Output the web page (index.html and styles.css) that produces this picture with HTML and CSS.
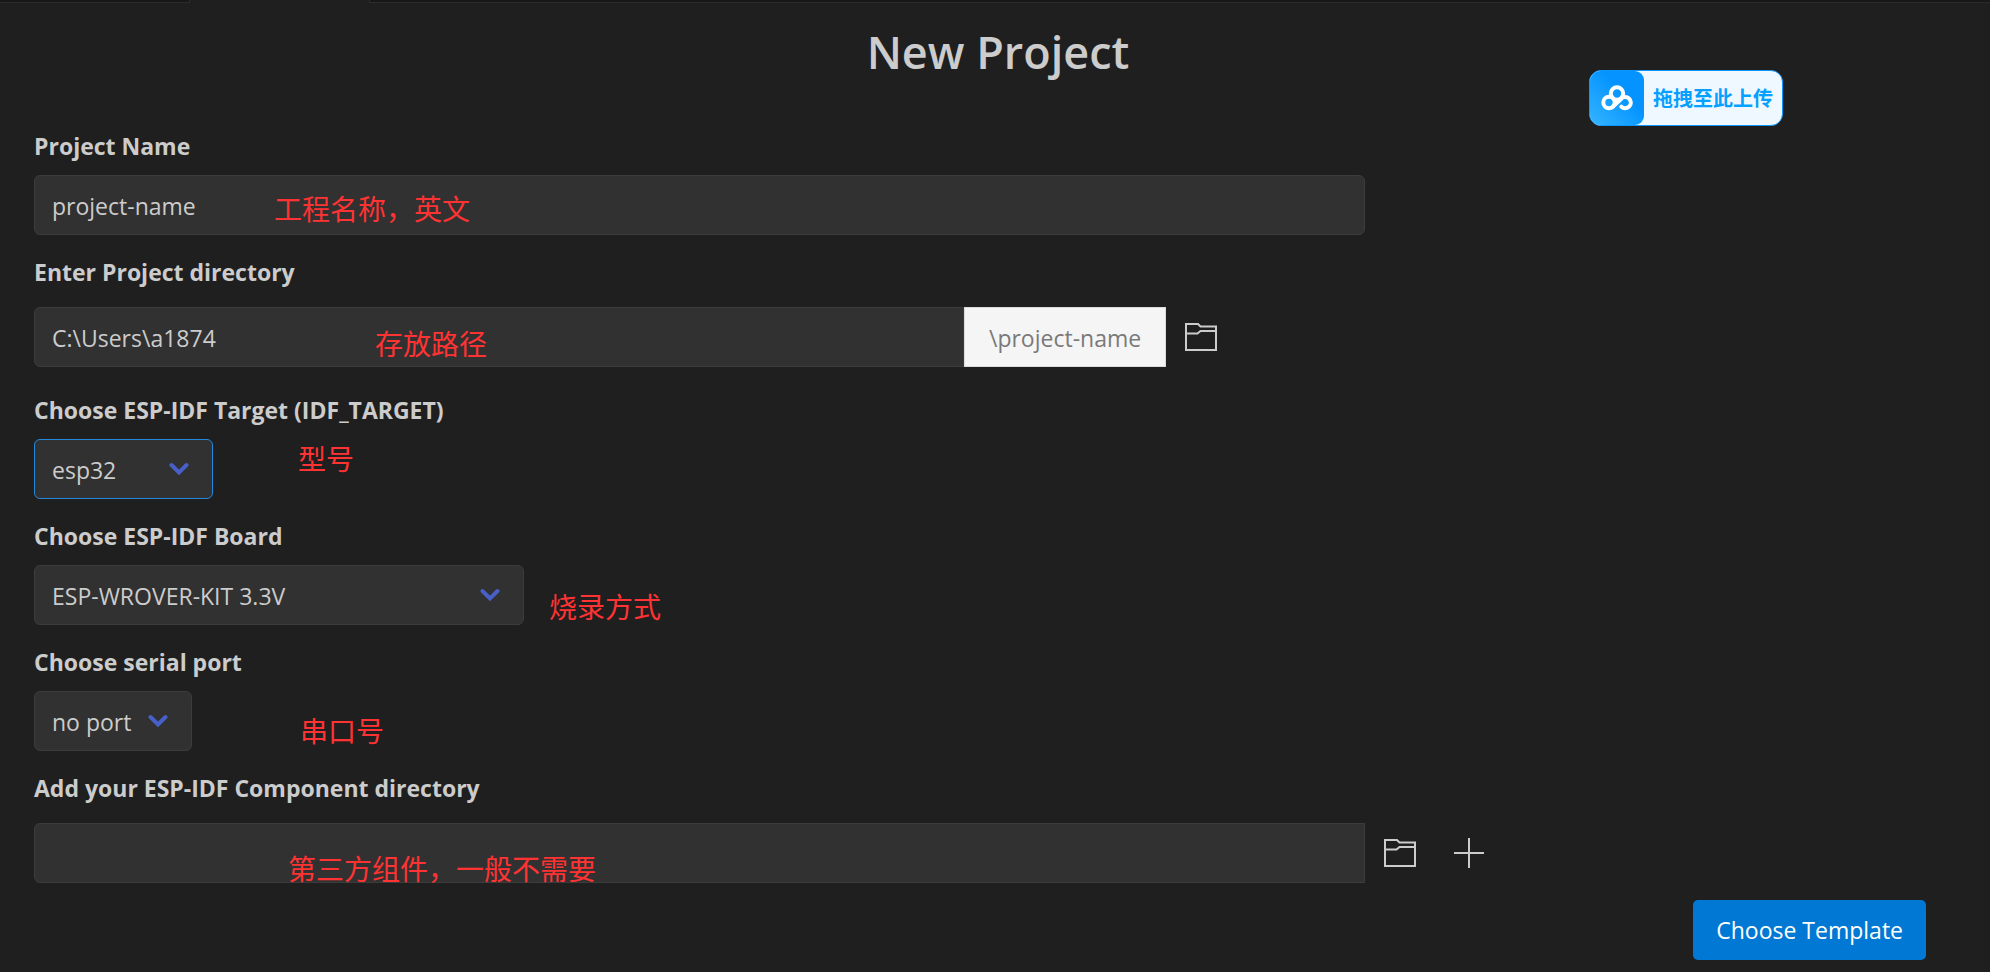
FILE: index.html
```html
<!DOCTYPE html>
<html lang="en">
<head>
<meta charset="utf-8">
<title>New Project</title>
<link rel="stylesheet" href="styles.css">
</head>
<body>
<svg class="defs" aria-hidden="true">
  <symbol id="folder" viewBox="0 0 32 28">
    <path d="M1 1H13L15.500 3.500H31V27H1ZM1 10.500H12.500L15.500 8H31"/>
  </symbol>
  <symbol id="chevron" viewBox="0 0 20 14">
    <path d="M2.500 3L10 10.500L17.500 3"/>
  </symbol>
</svg>
<div class="tabs"><div class="tab tab-first"></div><div class="tab tab-active"></div><div class="tab tab-rest"></div></div>
<header class="header"><h1 class="title">New Project</h1></header>
<main class="form">
  <div class="field">
    <label class="label" for="name">Project Name</label>
    <div class="row">
      <input class="input wide" id="name" type="text" value="project-name">
      <span class="note note-name">工程名称，英文</span>
    </div>
  </div>
  <div class="field spaced">
    <label class="label" for="dir">Enter Project directory</label>
    <div class="row">
      <input class="input joined path" id="dir" type="text" value="C:\Users\a1874">
      <span class="addon">\project-name</span>
      <button class="icon-button" type="button" aria-label="Choose project directory"><svg class="icon folder"><use href="#folder"/></svg></button>
      <span class="note note-dir">存放路径</span>
    </div>
  </div>
  <div class="field">
    <label class="label" for="target">Choose ESP-IDF Target (IDF_TARGET)</label>
    <div class="row">
      <div class="select target"><select class="input focused" id="target"><option>esp32</option></select><svg class="chevron"><use href="#chevron"/></svg></div>
      <span class="note note-target">型号</span>
    </div>
  </div>
  <div class="field">
    <label class="label" for="board">Choose ESP-IDF Board</label>
    <div class="row">
      <div class="select board"><select class="input" id="board"><option>ESP-WROVER-KIT 3.3V</option></select><svg class="chevron"><use href="#chevron"/></svg></div>
      <span class="note note-board">烧录方式</span>
    </div>
  </div>
  <div class="field">
    <label class="label" for="port">Choose serial port</label>
    <div class="row">
      <div class="select port"><select class="input" id="port"><option>no port</option></select><svg class="chevron"><use href="#chevron"/></svg></div>
      <span class="note note-port">串口号</span>
    </div>
  </div>
  <div class="field spaced">
    <label class="label" for="component">Add your ESP-IDF Component directory</label>
    <div class="row">
      <input class="input joined wide" id="component" type="text">
      <button class="icon-button" type="button" aria-label="Choose component directory"><svg class="icon folder"><use href="#folder"/></svg></button>
      <button class="icon-button" type="button" aria-label="Add component directory"><svg class="icon plus" viewBox="0 0 30 30"><path d="M15 0V30M0 15H30"/></svg></button>
      <span class="note note-component">第三方组件，一般不需要</span>
    </div>
  </div>
  <div class="actions"><button class="primary" type="button">Choose Template</button></div>
</main>
<button class="upload" type="button">
  <span class="upload-logo"><svg class="cloud" viewBox="0 0 32 26">
    <circle cx="16" cy="8.500" r="6.200"/>
    <path d="M12 21.500L20 14A5.600 5.600 0 1 1 20.300 21.600"/>
    <circle cx="8" cy="17.500" r="5.700"/>
  </svg></span>
  <span class="upload-text">拖拽至此上传</span>
</button>
</body>
</html>
```
FILE: styles.css
```css
* { box-sizing: border-box; }
body {
  margin: 0;
  min-height: 100vh;
  background: #1f1f1f;
  color: #cccccc;
  font-family: "Open Sans", "Noto Sans CJK SC", sans-serif;
  font-size: 23px;
  line-height: 36px;
}
button, input, select { font: inherit; color: inherit; }
.defs { position: absolute; width: 0; height: 0; }
.tabs { display: flex; height: 3px; }
.tab { background: #181818; border-bottom: 1px solid #2b2b2b; }
.tab-first { width: 190px; border-right: 1px solid #2b2b2b; }
.tab-active { width: 179px; background: none; border: 0; }
.tab-rest { flex: 1; border-left: 1px solid #2b2b2b; }
.header { padding: 19px 28px 46px 34px; }
.title { margin: 0; font-size: 45px; line-height: 60px; font-weight: 600; text-align: center; }
.form { padding: 0 54px 12px 34px; }
.field { margin-bottom: 19px; }
.label { display: block; width: fit-content; margin-bottom: 11px; font-weight: 700; }
.row { position: relative; display: flex; align-items: center; }
.input {
  height: 60px;
  padding: 2px 17px 0;
  border: 1px solid #3c3c3c;
  border-radius: 6px;
  background: #313131;
  color: #cccccc;
  outline: 0;
}
.wide { width: 70%; }
.path { width: calc(49% - 2px); }
.joined { border-radius: 6px 0 0 6px; }
.spaced .label { margin-bottom: 17px; }
.spaced { margin-bottom: 25px; }
.spaced:has(+ .actions) { margin-bottom: 17px; }
.addon {
  height: 60px;
  padding: 0 24px;
  border: 1px solid #dbdbdb;
  background: #f5f5f5;
  color: #7a7a7a;
  line-height: 60px;
}
.icon-button { display: flex; margin: 0 0 0 19px; padding: 0; border: 0; background: none; }
.icon-button + .icon-button { margin-left: 38px; }
.icon { fill: none; stroke: #cccccc; stroke-width: 2; }
.folder { width: 32px; height: 28px; }
.plus { width: 30px; height: 30px; }
.select { position: relative; }
.select .input { width: 100%; appearance: none; }
.select .focused { border-color: #2488db; }
.target { width: 179px; }
.board { width: 490px; }
.port { width: 158px; }
.chevron {
  position: absolute;
  top: 23px;
  right: 24px;
  width: 20px;
  height: 14px;
  fill: none;
  stroke: #485fc7;
  stroke-width: 4;
  stroke-linecap: round;
  pointer-events: none;
}
.note {
  position: absolute;
  color: #ff3333;
  font-family: "Noto Sans CJK SC", sans-serif;
  font-size: 28px;
  white-space: nowrap;
  pointer-events: none;
}
.note-name { left: 240px; top: 15px; }
.note-dir { left: 341px; top: 18px; }
.note-target { left: 264px; top: 1px; }
.note-board { left: 515px; top: 23px; }
.note-port { left: 266px; top: 21px; }
.note-component { left: 254px; top: 27px; }
.actions { display: flex; justify-content: flex-end; padding-right: 10px; }
.primary { height: 60px; padding: 0 23px; border: 0; border-radius: 5px; background: #0078d4; color: #ffffff; }
.upload {
  position: absolute;
  top: 70px;
  right: 207px;
  display: flex;
  align-items: center;
  height: 56px;
  padding: 0;
  border: 1px solid #0a95ff;
  border-radius: 12px;
  background: #f0f8ff;
  color: #06a0ff;
  overflow: hidden;
}
.upload-logo {
  display: flex;
  align-items: center;
  justify-content: center;
  width: 54px;
  height: 54px;
  border-radius: 0 9px 9px 0;
  background: linear-gradient(45deg, #36b5ff, #0594ff 60%);
}
.cloud { width: 32px; height: 26px; fill: none; stroke: #ffffff; stroke-width: 4; stroke-linecap: round; }
.upload-text { padding: 0 9px; font-family: "Noto Sans CJK SC", sans-serif; font-size: 20px; font-weight: 700; }
```
